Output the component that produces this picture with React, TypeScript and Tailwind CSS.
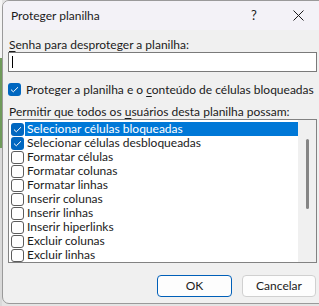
import { useState } from 'react'

const OPTIONS = [
  { label: 'Selecionar células bloqueadas', checked: true },
  { label: 'Selecionar células desbloqueadas', checked: true },
  { label: 'Formatar células', checked: false },
  { label: 'Formatar colunas', checked: false },
  { label: 'Formatar linhas', checked: false },
  { label: 'Inserir colunas', checked: false },
  { label: 'Inserir linhas', checked: false },
  { label: 'Inserir hiperlinks', checked: false },
  { label: 'Excluir colunas', checked: false },
  { label: 'Excluir linhas', checked: false },
]

function Check({ on }: { on: boolean }) {
  if (on) {
    return (
      <span className="w-[13px] h-[13px] rounded-[3px] bg-[#0067c0] flex items-center justify-center shrink-0">
        <svg width="9" height="7" viewBox="0 0 9 7">
          <path d="M1 3.6 L3.3 5.8 L8 1.2" stroke="#fff" strokeWidth="1" fill="none" />
        </svg>
      </span>
    )
  }
  return <span className="w-[13px] h-[13px] rounded-[3px] border border-[#5c5c5c] bg-white shrink-0" />
}

export default function App() {
  const [items, setItems] = useState(OPTIONS)
  const [protect, setProtect] = useState(true)

  return (
    <div
      className="w-[319px] h-[306px] bg-[#e4e4e4] overflow-hidden flex text-[12px] text-[#1b1b1b] whitespace-nowrap"
      style={{ fontFamily: 'Lato, "Noto Sans", sans-serif' }}
    >
      <div className="w-[2px] shrink-0 flex flex-col">
        <div className="h-[58px] bg-[#f4f4f4]" />
        <div className="h-[90px] bg-[#6f9a5a]" />
        <div className="flex-1 bg-[#d9d9d9]" />
      </div>
      <div className="w-[322px] h-[304px] shrink-0 rounded-l-[7px] border border-[#9a9a9a] bg-[#f0f0f0] flex flex-col overflow-hidden">
        {/* title bar */}
        <div className="h-[29px] bg-[#f3f2f7] flex items-center pl-[8px] shrink-0">
          <span className="flex-1 leading-none">Proteger planilha</span>
          <span className="w-[14px] text-center text-[13px] leading-none mr-[32px]">?</span>
          <svg width="11" height="11" viewBox="0 0 11 11" className="mr-[19px]">
            <path d="M0.5 0.5 L10.5 10.5 M10.5 0.5 L0.5 10.5" stroke="#1b1b1b" strokeWidth="1" />
          </svg>
        </div>

        <div className="pl-[5px] flex flex-col">
          <div className="h-[22px] flex items-end pl-[1px] pb-[1px] leading-none">
            <span><span className="underline underline-offset-2">S</span>enha para desproteger a planilha:</span>
          </div>
          <div className="w-[309px] h-[20px] bg-white border border-[#7a7a7a] flex items-center pl-[3px]">
            <span className="w-[1px] h-[12px] bg-black" />
          </div>

          <button
            onClick={() => setProtect(p => !p)}
            className="mt-[11px] h-[13px] flex items-center gap-[5px] text-left"
          >
            <Check on={protect} />
            <span className="leading-none">
              Proteger a planilha e o <span className="underline underline-offset-2">c</span>onteúdo de células bloqueadas
            </span>
          </button>

          <div className="mt-[10px] h-[12px] flex items-center pl-[1px] leading-none">
            <span>Permitir que todos os <span className="underline underline-offset-2">u</span>suários desta planilha possam:</span>
          </div>

          <div className="mt-[1px] w-[309px] h-[144px] bg-white border border-[#828282] flex">
            <div className="flex-1 pt-[2px] pl-[2px] flex flex-col">
              {items.map((it, i) => (
                <div
                  key={it.label}
                  onClick={() => setItems(xs => xs.map((x, j) => (j === i ? { ...x, checked: !x.checked } : x)))}
                  className="h-[14px] flex items-center"
                >
                  <Check on={it.checked} />
                  <span
                    className={
                      i === 0
                        ? 'ml-[1px] flex-1 h-[14px] bg-[#0078d7] text-white pl-[2px] flex items-center leading-none'
                        : 'ml-[1px] flex-1 h-[14px] pl-[2px] flex items-center leading-none'
                    }
                  >
                    {it.label}
                  </span>
                </div>
              ))}
            </div>
            <div className="w-[18px] bg-[#f0f0f0] flex justify-center pt-[19px]">
              <div className="w-[3px] h-[70px] rounded-full bg-[#858585]" />
            </div>
          </div>

          <div className="mt-[12px] flex gap-[10px] pl-[149px]">
            <button className="w-[75px] h-[22px] rounded-[4px] border border-[#005fb8] bg-[#fdfdfd] leading-none">
              OK
            </button>
            <button className="w-[74px] h-[22px] rounded-[4px] border border-[#d0d0d0] bg-[#fdfdfd] leading-none">
              Cancelar
            </button>
          </div>
        </div>
      </div>
    </div>
  )
}
